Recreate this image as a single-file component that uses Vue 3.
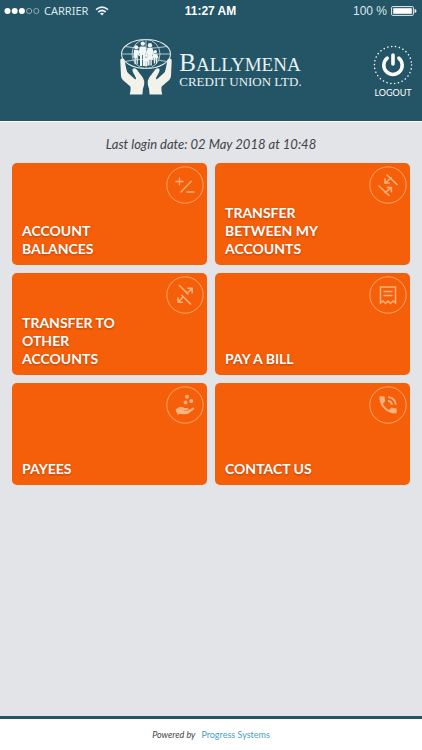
<script setup>
const tiles = [
  { label: 'Account balances', icon: 'balances' },
  { label: 'Transfer between my accounts', icon: 'between' },
  { label: 'Transfer to other accounts', icon: 'other' },
  { label: 'Pay a bill', icon: 'bill' },
  { label: 'Payees', icon: 'payees' },
  { label: 'Contact us', icon: 'contact' },
]
</script>

<template>
  <div class="screen">
    <header class="header">
      <div class="status">
        <div class="status-left">
          <svg class="dots" viewBox="0 0 36 8" aria-hidden="true">
            <circle cx="3.5" cy="4" r="3" fill="#fff" />
            <circle cx="10.7" cy="4" r="3" fill="#fff" />
            <circle cx="17.9" cy="4" r="3" fill="#fff" />
            <g fill="none" stroke="#a9bcc4" stroke-width="0.8">
              <circle cx="25.1" cy="4" r="2.6" />
              <circle cx="32.3" cy="4" r="2.6" />
            </g>
          </svg>
          <span>CARRIER</span>
          <svg class="wifi" viewBox="0 0 14 10" fill="none" stroke="#eaf1f3" stroke-width="1.7" aria-hidden="true">
            <path d="M1 3.6Q7-1.4 13 3.6" />
            <path d="M3.3 6Q7 3 10.7 6" />
            <path d="M5 7.4Q7 6 9 7.4L7 9.6Z" fill="#eaf1f3" stroke="none" />
          </svg>
        </div>
        <strong class="clock">11:27 AM</strong>
        <div class="status-right">
          <span>100 %</span>
          <svg class="battery" viewBox="0 0 26 10" aria-hidden="true">
            <rect x="0.6" y="0.6" width="21.8" height="8.8" rx="1" fill="none" stroke="#e6eef1" />
            <rect x="2.2" y="2.2" width="18.6" height="5.6" fill="#fff" />
            <path d="M23.5 3q2 0 2 2t-2 2z" fill="#e6eef1" />
          </svg>
        </div>
      </div>

      <div class="brand-row">
        <div class="brand">
          <svg class="mark" viewBox="0 0 52 58" aria-hidden="true">
            <g fill="none" stroke="#c3d5da" stroke-width="0.9">
              <ellipse cx="26" cy="16" rx="24.5" ry="14.5" stroke="#dde8ea" stroke-width="1.1" />
              <ellipse cx="26" cy="16" rx="14" ry="14.5" />
              <path d="M26 1.5v29M1.5 16h49M5 8.5Q26 12 47 8.5M5 23.5Q26 19 47 23.5" />
            </g>
            <g fill="#f1f5f3">
              <circle cx="16.2" cy="9.2" r="2" />
              <path d="M14 11.8h4.4l1.6 6-1.2.6-1-3v10.8h-1.2v-6h-.8v6h-1.3v-6.4h-1.2z" />
              <circle cx="22.8" cy="5.6" r="2.2" />
              <path d="M20 8.4h5.6l1.2 7-1.4.6-.4-2v14h-2v-11h-.8v11h-2.2V15l-1.8 1z" />
              <circle cx="30" cy="7.2" r="2.2" />
              <path d="M27.6 10h4.8l2 7-1.2.4-1-2 1.2 6h-1.6v6h-1.4v-6h-.8v6H28v-6h-1.2l1-6-1 1.4-.8-1z" />
              <circle cx="35.2" cy="13.8" r="1.8" />
              <path d="M33.4 16h3.8l1.6 4.6-1 .4-.8-1.4v6h-1.2v-5h-.8v5h-1.2v-5.8l-1 1-.4-.8z" />
              <circle cx="26.4" cy="17.6" r="1.5" />
              <path d="M25 19.4h2.8l.8 4h-1v4.6h-2.4v-4.6h-1z" />
            </g>
            <g id="hand" fill="#f1f2ea">
              <path d="M2.4 20.5Q.3 20.2.3 22.5L1 38q.2 2.4 1.8 4l7.5 6.6q.8 2-.5 7.9H22.4Q22.4 51 24.2 46.5Q25 43 22.8 39.5L16.5 31.2Q14.2 29.2 12.6 31.1Q12 32.5 13 34.2L16 40Q16.2 41.8 15 41.2L8.6 35.6Q6.8 34.2 6.3 31L4.6 22.6Q4.3 20.7 2.4 20.5Z" />
            </g>
            <use href="#hand" transform="matrix(-1 0 0 1 52 0)" />
          </svg>
          <div class="brand-text">
            <div class="brand-name"><span class="initial">B</span>ALLYMENA</div>
            <div class="brand-sub">CREDIT UNION LTD.</div>
          </div>
        </div>
        <button class="logout" type="button">
          <svg viewBox="0 0 40 40" fill="none" stroke="#fff" aria-hidden="true">
            <circle cx="20" cy="20" r="18.6" stroke-width="1.5" stroke-linecap="round" stroke-dasharray="0.1 3.796" />
            <path d="M14.2 13.1A9.2 9.2 0 1 0 25.8 13.1" stroke-width="3.5" stroke-linecap="round" />
            <path d="M20 10v9" stroke-width="3.6" stroke-linecap="round" />
          </svg>
          <span>LOGOUT</span>
        </button>
      </div>
    </header>

    <main class="main">
      <p class="last-login">Last login date: 02 May 2018 at 10:48</p>
      <nav class="tiles">
        <button v-for="tile in tiles" :key="tile.icon" class="tile" type="button">
          <svg class="tile-icon" viewBox="0 0 38 38" fill="none" stroke="#ffb27e" aria-hidden="true">
            <circle cx="19" cy="19" r="18.2" stroke-width="0.8" />
            <g v-if="tile.icon === 'balances'" stroke-width="1.3">
              <path d="M9.5 15.5h8M13.500 11.500v8M14.500 26.500L25.500 15M20.500 26h8" />
            </g>
            <g v-else-if="tile.icon === 'between'" stroke-width="1.5">
              <path d="M17.5 8.5L28.5 19M22.800 11.500L16.500 16.500M16 12.300v4.700h4.700" />
              <path d="M9.5 19.5L20.5 30M15.500 27L22 22M17.700 21.500h4.700v4.700" />
            </g>
            <g v-else-if="tile.icon === 'other'" stroke-width="1.5">
              <path d="M13 9l9.5 9.5M20.500 18l5.500-5.500M21.300 12.300h4.900v4.900" />
              <path d="M15.5 19l9.5 9.5M17.500 20.500L12.300 26M12 21.500v4.800h4.900" />
            </g>
            <g v-else-if="tile.icon === 'bill'" stroke-width="1.5">
              <path d="M11.5 11h15v16l-2.500-2-2.500 2.500-2.500-2.500-2.500 2.500-2.500-2.500-2.500 2zM14.500 15.500h9M14.500 19.500h9" />
            </g>
            <g v-else-if="tile.icon === 'payees'" fill="#ffb27e" stroke="none">
              <circle cx="19.5" cy="16.5" r="1.9" />
              <circle cx="21" cy="10.8" r="2" />
              <circle cx="25.3" cy="15" r="2" />
              <path d="M9.5 23.5l3.3-2.300q2-.9 4 0l1.700.8h3q1.400.2 1 1.300-.4.700-1.500.7h-3.500v.6h4.300l4.200-2.700q1.600-.7 2.200.2.300.7-.7 1.600L22 27.700q-1.600.7-4 .5l-4.700-.2-1.500 1z" />
            </g>
            <g v-else transform="translate(7.5 7.3) scale(0.96)" fill="#ffb27e" stroke="none">
              <path d="M20 15.5c-1.250 0-2.450-.2-3.570-.57-.35-.11-.74-.03-1.020.24l-2.200 2.200c-2.830-1.440-5.150-3.750-6.590-6.590l2.200-2.200c.28-.27.360-.66.250-1.010C8.700 6.450 8.500 5.250 8.500 4c0-.55-.45-1-1-1H4c-.55 0-1 .45-1 1 0 9.390 7.610 17 17 17 .55 0 1-.45 1-1v-3.500c0-.55-.45-1-1-1zM19 12h2c0-4.970-4.030-9-9-9v2c3.870 0 7 3.130 7 7zm-4 0h2c0-2.760-2.240-5-5-5v2c1.660 0 3 1.340 3 3z" />
            </g>
          </svg>
          <span class="tile-label">{{ tile.label }}</span>
        </button>
      </nav>
    </main>

    <footer class="footer">
      <em>Powered by</em>
      <a href="#">Progress Systems</a>
    </footer>
  </div>
</template>

<style>
body {
  margin: 0;
}
</style>

<style scoped>
.screen {
  display: flex;
  flex-direction: column;
  min-height: 100vh;
  background: #e2e4e8;
  font-family: Lato, sans-serif;
}
button {
  margin: 0;
  border: 0;
  font-family: inherit;
  cursor: pointer;
}
.header {
  padding-bottom: 21px;
  background: #245566;
  border-bottom: 1px solid #fff;
  color: #fff;
}
.status {
  display: grid;
  grid-template-columns: 1fr auto 1fr;
  align-items: center;
  height: 22px;
  padding: 0 5px 0 4px;
  font-size: 12px;
  line-height: 22px;
  color: #dce7eb;
}
.status-left,
.status-right {
  display: flex;
  align-items: center;
  gap: 4px;
}
.status-left {
  font-family: "Noto Sans", sans-serif;
  font-size: 11px;
}
.status-right {
  justify-content: flex-end;
  font-family: "Liberation Sans", sans-serif;
}
.clock {
  font-family: "Liberation Sans", sans-serif;
  color: #fff;
}
.dots {
  width: 36px;
  height: 8px;
}
.wifi {
  width: 14px;
  height: 10px;
  margin-left: 3px;
}
.battery {
  width: 26px;
  height: 10px;
}
.brand-row {
  display: grid;
  grid-template-columns: 1fr auto 1fr;
  align-items: start;
  padding: 16px 9px 0;
}
.brand {
  grid-column: 2;
  display: flex;
  align-items: center;
  gap: 7px;
}
.mark {
  width: 52px;
  height: 58px;
}
.brand-text {
  padding-top: 4px;
  font-family: "Liberation Serif", serif;
  color: #e8f1f2;
  white-space: nowrap;
}
.brand-name {
  font-size: 19px;
  line-height: 23px;
}
.initial {
  font-size: 25px;
}
.brand-sub {
  font-size: 13px;
  line-height: 12px;
}
.logout {
  justify-self: end;
  display: flex;
  flex-direction: column;
  align-items: center;
  gap: 1px;
  padding: 7px 0 0;
  background: none;
  color: #fff;
  font-size: 9px;
  line-height: 14px;
}
.logout svg {
  width: 40px;
  height: 40px;
}
.main {
  flex: 1;
  padding: 12px;
}
.last-login {
  margin: 0 0 9px;
  text-align: center;
  font-size: 13px;
  font-style: italic;
  line-height: 20px;
  color: #3f4347;
}
.tiles {
  display: grid;
  grid-template-columns: 1fr 1fr;
  gap: 8px;
}
.tile {
  display: flex;
  flex-direction: column;
  justify-content: space-between;
  min-height: 102px;
  padding: 3px 3px 7px 10px;
  border-radius: 5px;
  background: #f55f0a;
  color: #fff;
  text-align: left;
}
.tile-icon {
  align-self: flex-end;
  flex: none;
  width: 38px;
  height: 38px;
}
.tile-label {
  max-width: 120px;
  font-size: 14px;
  font-weight: 700;
  line-height: 18px;
  text-transform: uppercase;
  text-shadow: 0 1px 2px rgba(120, 40, 0, 0.5);
}
.footer {
  display: flex;
  justify-content: center;
  gap: 6px;
  padding: 8px 0 7px;
  border-top: 3px solid #245566;
  background: #fff;
  font-size: 9px;
  line-height: 16px;
  color: #444;
}
.footer a {
  color: #4a9fbd;
  text-decoration: none;
}
</style>
